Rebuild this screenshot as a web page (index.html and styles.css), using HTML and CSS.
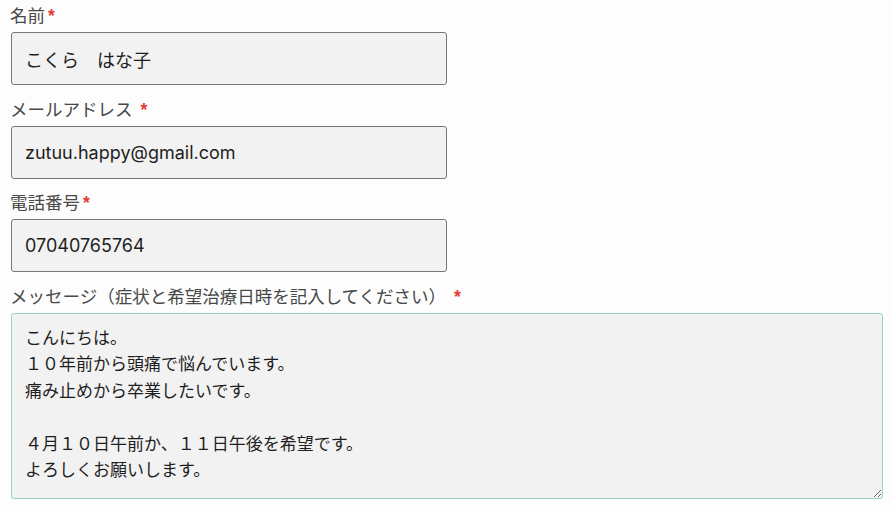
FILE: index.html
```html
<!DOCTYPE html>
<html lang="ja">
<head>
    <meta charset="UTF-8">
    <meta name="viewport" content="width=device-width, initial-scale=1.0">
    <title>お問い合わせ</title>
    <link rel="stylesheet" href="styles.css">
</head>
<body>
    <form class="contact-form">
        <div class="field">
            <label for="name">名前<span class="required">*</span></label>
            <input type="text" id="name" name="name" value="こくら　はな子">
        </div>

        <div class="field">
            <label for="email">メールアドレス <span class="required">*</span></label>
            <input type="email" id="email" name="email" value="zutuu.happy@gmail.com">
        </div>

        <div class="field">
            <label for="tel">電話番号<span class="required">*</span></label>
            <input type="tel" id="tel" name="tel" value="07040765764">
        </div>

        <div class="field">
            <label for="message">メッセージ（症状と希望治療日時を記入してください） <span class="required">*</span></label>
            <textarea id="message" name="message">こんにちは。
１０年前から頭痛で悩んでいます。
痛み止めから卒業したいです。

４月１０日午前か、１１日午後を希望です。
よろしくお願いします。</textarea>
        </div>
    </form>
</body>
</html>
```

FILE: styles.css
```css
body {
    margin: 0;
    padding: 0 8px 0 11px;
    background-color: #fcfdfc;
    font-family: "Liberation Sans", "Noto Sans CJK JP", sans-serif;
    color: #222;
}

.contact-form {
    display: flex;
    flex-direction: column;
    gap: 8.5px;
}

.field {
    display: flex;
    flex-direction: column;
}

.field label {
    display: block;
    margin-left: -1px;
    font-size: 17.5px;
    line-height: 32px;
    color: #484848;
}

.required {
    margin-left: 3px;
    color: #e53a3a;
    font-weight: bold;
}

.field input,
.field textarea {
    box-sizing: border-box;
    border: 1px solid #777;
    border-radius: 3px;
    background-color: #f3f2f2;
    font-family: "Inter", "Noto Sans CJK JP", sans-serif;
    color: #1e1e1e;
    outline: none;
}

.field input {
    width: 436px;
    height: 53px;
    padding: 0 13px;
    font-size: 18px;
}

.field textarea {
    width: 872px;
    height: 186px;
    padding: 10px 13px 11px;
    border-color: #94d9b3;
    font-family: "Noto Sans CJK JP", sans-serif;
    font-size: 17px;
    line-height: 26.5px;
    resize: vertical;
}
```
